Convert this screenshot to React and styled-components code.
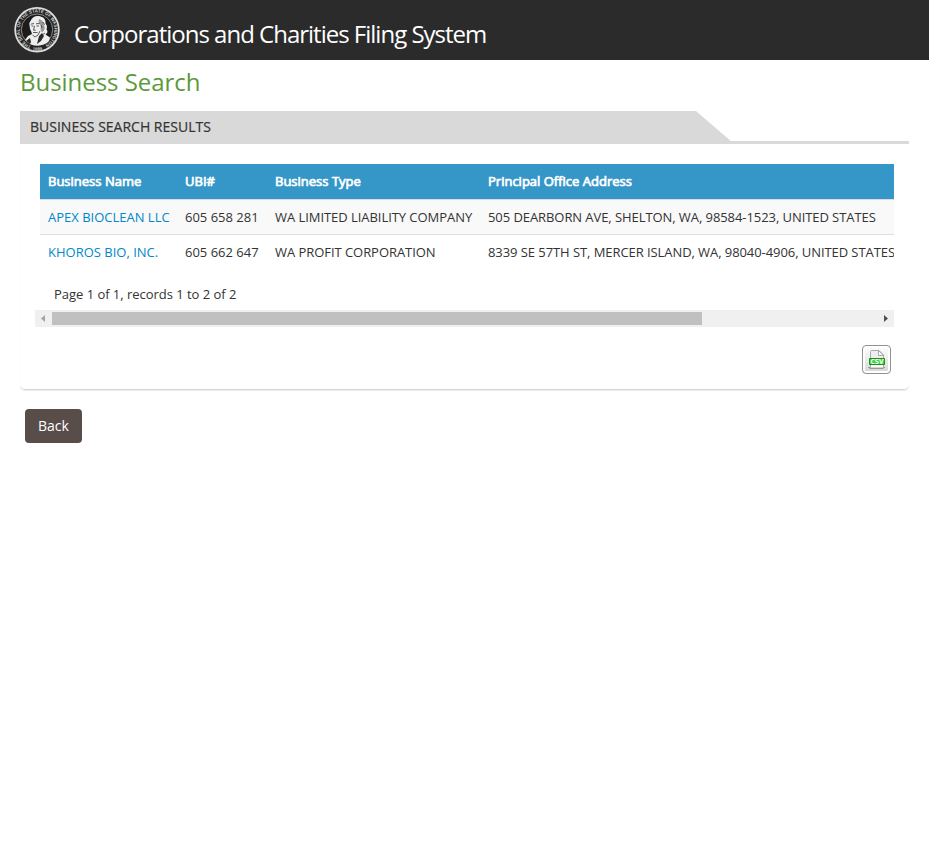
import React from "react";
import styled, { createGlobalStyle } from "styled-components";

const GlobalStyle = createGlobalStyle`
  *, *::before, *::after { box-sizing: border-box; }
  body {
    margin: 0;
    background: #fff;
    color: #333;
    font: 13px/20px "Open Sans", "Noto Sans", sans-serif;
  }
`;

const Header = styled.header`
  display: flex;
  height: 60px;
  padding: 6px 13px;
  background: #2b2b2b;
`;

const SiteTitle = styled.div`
  margin: 9px 0 0 13px;
  color: #fff;
  font-size: 24px;
  line-height: 38px;
  letter-spacing: -1px;
  white-space: nowrap;
`;

const Main = styled.main`
  padding: 0 20px;
`;

const PageTitle = styled.h1`
  margin: 0;
  height: 51px;
  padding-top: 4px;
  color: #5b9a3c;
  font-size: 24px;
  font-weight: 400;
  line-height: 36px;
  letter-spacing: -0.04px;
`;

const Panel = styled.section`
  height: 279px;
  border-bottom: 1px solid #d5d5d5;
  border-radius: 0 0 5px 5px;
  box-shadow: 0 1px 1px rgba(0, 0, 0, 0.08);
`;

const PanelHeading = styled.div`
  height: 33px;
  border-bottom: 3px solid #d9d9d9;
`;

const PanelTab = styled.h2`
  width: 712px;
  height: 31px;
  margin: 0;
  padding-left: 10px;
  background: #d9d9d9;
  clip-path: polygon(0 0, 676px 0, 712px 31px, 0 31px);
  font-size: 14px;
  font-weight: 400;
  line-height: 32px;
  -webkit-text-stroke: 0.2px #333;
`;

const Results = styled.div`
  width: 859px;
  margin: 20px 0 0 15px;
`;

const TableClip = styled.div`
  margin-left: 5px;
  overflow: hidden;
`;

const Table = styled.div`
  width: 1120px;
`;

const Row = styled.div`
  display: grid;
  grid-template-columns: 137px 90px 213px 1fr;
  height: 35px;
  line-height: 35px;
  white-space: nowrap;
  background: ${(p) => (p.$striped ? "#f9f9f9" : "#fff")};
  border-top: 1px solid #ddd;
`;

const HeadRow = styled(Row)`
  background: #3596c8;
  border-top: 0;
  color: #fff;
`;

const Cell = styled.span`
  padding-left: 8px;
  letter-spacing: ${(p) => p.$spacing || "0"};
`;

const HeadCell = styled(Cell)`
  -webkit-text-stroke: 0.7px #fff;
`;

const BusinessLink = styled.a`
  color: #0088cc;
  text-decoration: none;
`;

const PageInfo = styled.div`
  height: 41px;
  padding: 15px 0 0 19px;
  letter-spacing: -0.03px;
`;

const ScrollBar = styled.div`
  display: flex;
  align-items: center;
  justify-content: space-between;
  height: 17px;
  background: #f0f0f0;
`;

const ScrollThumb = styled.div`
  width: 650px;
  height: 13px;
  margin-right: auto;
  background: #c0c0c0;
`;

const ScrollArrow = styled.svg`
  width: 17px;
  height: 17px;
  flex: none;
`;

const ExportRow = styled.div`
  display: flex;
  justify-content: flex-end;
  padding: 18px 3px 0 0;
`;

const ExportButton = styled.button`
  width: 29px;
  height: 29px;
  padding: 0;
  border: 1px solid #929292;
  border-radius: 4px;
  background: linear-gradient(#fff, #d6d6d6);
  box-shadow: inset 0 0 0 2px #fff;
`;

const ExportGlyph = styled.svg`
  display: block;
`;

const BackButton = styled.button`
  display: block;
  width: 57px;
  height: 34px;
  margin: 19px 0 0 5px;
  padding: 0;
  border: 0;
  border-radius: 4px;
  background: #594d4a;
  color: #fff;
  font: 14px/34px "Open Sans", sans-serif;
`;

function Seal() {
  return (
    <svg width="48" height="48" viewBox="0 0 48 48">
      <defs>
        <path id="rim" d="M18 40A17.300 17.300 0 1 1 30 40" />
        <path id="foot" d="M14 42A20.700 20.700 0 0 0 34 42" />
      </defs>
      <circle cx="24" cy="23.700" r="21.800" fill="#242424" stroke="#dedede" strokeWidth="1.800" />
      <circle cx="24" cy="23.700" r="15.700" fill="#1c1c1c" stroke="#b8b8b8" strokeWidth="0.700" />
      <text fill="#d0d0d0" fontFamily="Liberation Sans" fontWeight="bold" fontSize="4.800">
        <textPath href="#rim" textLength="93" lengthAdjust="spacingAndGlyphs">
          THE SEAL OF THE STATE OF WASHINGTON
        </textPath>
        <textPath href="#foot" startOffset="6" fontSize="4.400">1889</textPath>
      </text>
      <path d="M17.500 15c1.500-4 6-6 10-4.500 4 1 5.500 4 5 7 2 2 1.500 4 1 6 2 2 .5 4-1 5l4.500 3-1 3.500c-3 3.500-8 4.500-12 4.500-5 0-9-2-12-5.500l3-4 4-2-1-3-1-2-.5-4c-.5-1.500 0-2.500 1-4z" fill="#eee" />
      <path d="M26 13c3 1 5 3 4.500 6 2 2 1 4 .5 5.500l-2 2-1.500-3 .5-4c-2-1-3-3-2-6.500z" fill="#999" />
      <path d="M17.800 18.200l3.200-.7m2 .3l3.500-.3M18.500 20h2m3 0h2.500m-4.500 0l-1 4.200h2.200M20 26.500h4.500M27 25l-2 4-3 2-2.500-2M28 19l1 3M30 16l1.500 3M29 29l3-2" fill="none" stroke="#333" strokeWidth=".8" />
      <path d="M26 30l3-3 2 3-3 5-4 3 1-4zM13 35l4-3 1 4-1 2z" fill="#2a2a2a" />
    </svg>
  );
}

function CsvIcon() {
  return (
    <ExportGlyph width="27" height="27" viewBox="0 0 27 27">
      <path d="M5 21.500h17M6.500 22.500h14" stroke="#999" />
      <path d="M7.500 21.500V5.500q0-1 1-1h7.500l4.500 4.500v12.500z" fill="#eee" stroke="#aaa" />
      <path d="M15.500 4.500v5h5z" fill="#fff" stroke="#999" strokeWidth=".8" />
      <path d="M8 20.500h12" stroke="#fff" strokeWidth="2" />
      <path d="M6.500 12.500h15v6h-15z" fill="#3ecb46" stroke="#10980f" />
      <text x="14" y="18" fill="#fff" fontFamily="DejaVu Sans" fontWeight="bold" fontSize="6.800" textAnchor="middle" textLength="13" lengthAdjust="spacingAndGlyphs">CSV</text>
    </ExportGlyph>
  );
}

const records = [
  {
    name: "APEX BIOCLEAN LLC",
    ubi: "605 658 281",
    type: "WA LIMITED LIABILITY COMPANY",
    address: "505 DEARBORN AVE, SHELTON, WA, 98584-1523, UNITED STATES",
  },
  {
    name: "KHOROS BIO, INC.",
    ubi: "605 662 647",
    type: "WA PROFIT CORPORATION",
    address: "8339 SE 57TH ST, MERCER ISLAND, WA, 98040-4906, UNITED STATES",
  },
];

export default function App() {
  return (
    <>
      <GlobalStyle />
      <Header>
        <Seal />
        <SiteTitle>Corporations and Charities Filing System</SiteTitle>
      </Header>
      <Main>
        <PageTitle>Business Search</PageTitle>
        <Panel>
          <PanelHeading>
            <PanelTab>BUSINESS SEARCH RESULTS</PanelTab>
          </PanelHeading>
          <Results>
            <TableClip>
              <Table>
                <HeadRow>
                  {["Business Name", "UBI#", "Business Type", "Principal Office Address"].map((h) => (
                    <HeadCell key={h}>{h}</HeadCell>
                  ))}
                </HeadRow>
                {records.map((r, i) => (
                  <Row key={r.ubi} $striped={i === 0}>
                    <Cell>
                      <BusinessLink>{r.name}</BusinessLink>
                    </Cell>
                    <Cell>{r.ubi}</Cell>
                    <Cell $spacing="-0.05px">{r.type}</Cell>
                    <Cell $spacing="-0.07px">{r.address}</Cell>
                  </Row>
                ))}
              </Table>
            </TableClip>
            <PageInfo>Page 1 of 1, records 1 to 2 of 2</PageInfo>
            <ScrollBar>
              <ScrollArrow>
                <path d="M10 5v7L6 8.500z" fill="#a3a3a3" />
              </ScrollArrow>
              <ScrollThumb />
              <ScrollArrow>
                <path d="M7 5v7l4-3.500z" fill="#505050" />
              </ScrollArrow>
            </ScrollBar>
            <ExportRow>
              <ExportButton aria-label="Export">
                <CsvIcon />
              </ExportButton>
            </ExportRow>
          </Results>
        </Panel>
        <BackButton>Back</BackButton>
      </Main>
    </>
  );
}
